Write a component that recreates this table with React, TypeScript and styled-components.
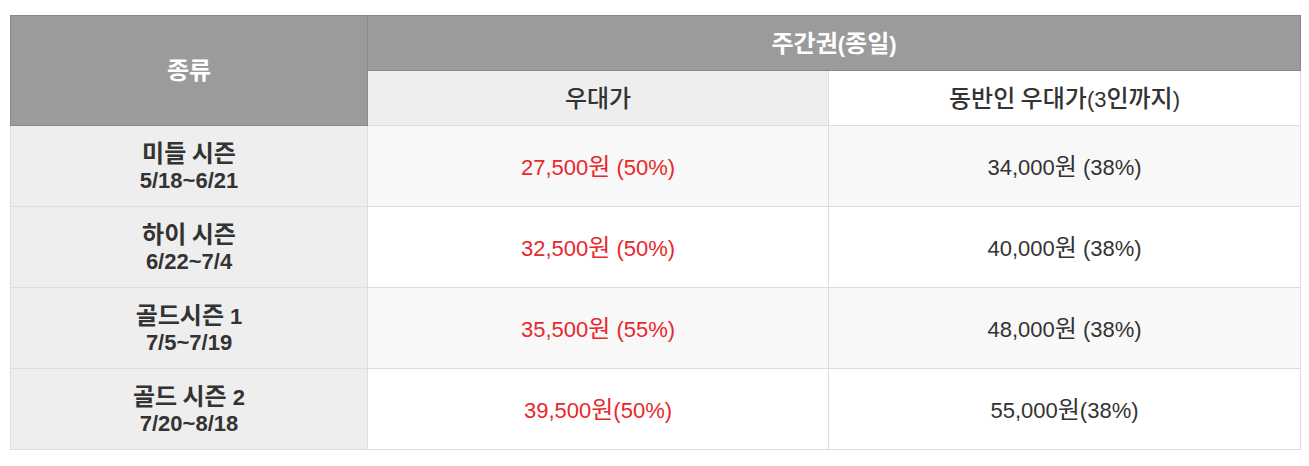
import React from "react";
import styled, { createGlobalStyle } from "styled-components";

const GlobalStyle = createGlobalStyle`
  html, body {
    margin: 0;
    padding: 0;
    background: #ffffff;
  }
  body {
    font-family: "Liberation Sans", "Noto Sans CJK KR", Arial, sans-serif;
    color: #333333;
  }
`;

const Page = styled.div`
  padding: 15px 10px 0 10px;
`;

const PriceTable = styled.table`
  width: 1290px;
  border-collapse: collapse;
  table-layout: fixed;
  font-size: 22px;
  line-height: 26px;
`;

const Ko = styled.span`
  font-family: "Noto Sans CJK KR", "Liberation Sans", sans-serif;
  font-size: 24px;
  line-height: 26px;
`;

const KoText = ({ text }: { text: string }) => {
  const parts = text.split(/([\uAC00-\uD7A3\u3131-\u318E]+(?: [\uAC00-\uD7A3]+)*)/);
  return (
    <>
      {parts.map((p, i) =>
        /[\uAC00-\uD7A3]/.test(p) ? <Ko key={i}>{p}</Ko> : <React.Fragment key={i}>{p}</React.Fragment>
      )}
    </>
  );
};

const HeadCell = styled.th<{ $light?: boolean; $white?: boolean }>`
  height: 54px;
  padding: 0;
  text-align: center;
  vertical-align: middle;
  font-weight: ${(p) => (p.$light || p.$white ? 500 : 700)};
  color: ${(p) => (p.$light || p.$white ? "#333333" : "#ffffff")};
  background: ${(p) => (p.$white ? "#ffffff" : p.$light ? "#eeeeee" : "#9b9b9b")};
  border: 1px solid ${(p) => (p.$light || p.$white ? "#dddddd" : "#888888")};
`;

const BodyRow = styled.tr<{ $shade: boolean }>`
  background: ${(p) => (p.$shade ? "#f8f8f8" : "#ffffff")};
`;

const SeasonCell = styled.td`
  height: 80px;
  padding: 0;
  text-align: center;
  vertical-align: middle;
  font-weight: 700;
  background: #eeeeee;
  border: 1px solid #dddddd;
  color: #333333;
`;

const SeasonLine = styled.div`
  line-height: 26px;
`;

const PriceCell = styled.td<{ $accent?: boolean }>`
  padding: 0;
  text-align: center;
  vertical-align: middle;
  font-weight: 400;
  color: ${(p) => (p.$accent ? "#e8282b" : "#333333")};
  border: 1px solid #dddddd;
`;

type Row = {
  name: string;
  date: string;
  discount: string;
  companion: string;
};

const rows: Row[] = [
  { name: "미들 시즌", date: "5/18~6/21", discount: "27,500원 (50%)", companion: "34,000원 (38%)" },
  { name: "하이 시즌", date: "6/22~7/4", discount: "32,500원 (50%)", companion: "40,000원 (38%)" },
  { name: "골드시즌 1", date: "7/5~7/19", discount: "35,500원 (55%)", companion: "48,000원 (38%)" },
  { name: "골드 시즌 2", date: "7/20~8/18", discount: "39,500원(50%)", companion: "55,000원(38%)" },
];

export default function App() {
  return (
    <>
      <GlobalStyle />
      <Page>
        <PriceTable>
          <colgroup>
            <col style={{ width: 357 }} />
            <col style={{ width: 461 }} />
            <col style={{ width: 472 }} />
          </colgroup>
          <thead>
            <tr>
              <HeadCell rowSpan={2}>
                <KoText text="종류" />
              </HeadCell>
              <HeadCell colSpan={2}>
                <KoText text="주간권(종일)" />
              </HeadCell>
            </tr>
            <tr>
              <HeadCell $light>
                <KoText text="우대가" />
              </HeadCell>
              <HeadCell $white>
                <KoText text="동반인 우대가(3인까지)" />
              </HeadCell>
            </tr>
          </thead>
          <tbody>
            {rows.map((r, i) => (
              <BodyRow key={r.name} $shade={i % 2 === 0}>
                <SeasonCell>
                  <SeasonLine>
                    <KoText text={r.name} />
                  </SeasonLine>
                  <SeasonLine>{r.date}</SeasonLine>
                </SeasonCell>
                <PriceCell $accent>
                  <KoText text={r.discount} />
                </PriceCell>
                <PriceCell>
                  <KoText text={r.companion} />
                </PriceCell>
              </BodyRow>
            ))}
          </tbody>
        </PriceTable>
      </Page>
    </>
  );
}
